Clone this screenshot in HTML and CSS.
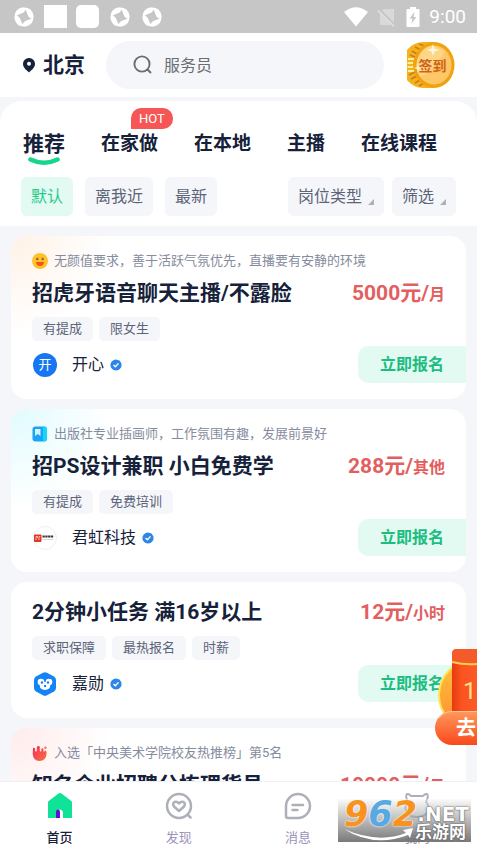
FILE: index.html
```html
<!DOCTYPE html>
<html lang="zh-CN">
<head>
<meta charset="utf-8">
<meta name="viewport" content="width=device-width, initial-scale=1">
<title>首页</title>
<link rel="stylesheet" href="styles.css">
</head>
<body>
<svg class="defs" aria-hidden="true">
  <defs>
    <path id="blade" d="M.6 11Q0 2.500 8 .6 11.500 0 11.500 2.500 10.500 6 6 7 2.500 8 .6 11Z" fill="#fff"/>
    <symbol id="shutter" viewBox="0 0 20 20">
      <use href="#blade"/>
      <use href="#blade" transform="rotate(90 10 10)"/>
      <use href="#blade" transform="rotate(180 10 10)"/>
      <use href="#blade" transform="rotate(270 10 10)"/>
    </symbol>
    <symbol id="verified" viewBox="0 0 12 12">
      <path d="M6 .4 7.700 1 9.500 1.500 10.500 3 11.500 4.500 11.500 6.500 11.200 8.200 10 9.700 8.500 11 6 11.500 3.500 11 2 9.700.8 8.200.4 6.300.7 4.300 1.700 2.500 3 1.400 4.500.8Z" fill="#2b86e8"/>
      <path d="M3.500 6 5.400 7.800 8.500 4.400" fill="none" stroke="#fff" stroke-width="1.400"/>
    </symbol>
  </defs>
</svg>

<div class="statusbar">
  <svg class="notice" viewBox="0 0 20 20"><use href="#shutter"/></svg>
  <span class="notice-box"></span>
  <span class="notice-box notice-box--round"></span>
  <svg class="notice" viewBox="0 0 20 20"><use href="#shutter"/></svg>
  <svg class="notice" viewBox="0 0 20 20"><use href="#shutter"/></svg>
  <div class="system">
    <svg width="24" height="20" viewBox="0 0 24 20"><path d="M0 5Q12-4.500 24 5L12 19.500Z" fill="#fff"/></svg>
    <svg width="20" height="20" viewBox="0 0 20 20"><path d="M7 2H17V18H3V6Z" fill="#d9d9d9"/><path d="M1 2 18 19" stroke="#c6c6c6" stroke-width="3.500"/><path d="M1 3.500 17 19.500" stroke="#dedede" stroke-width="1.800"/></svg>
    <svg width="14" height="20" viewBox="0 0 14 20"><path d="M4 0H10V2H12.500Q13.500 2 13.500 3V19Q13.500 20 12.500 20H1.500Q.5 20 .5 19V3Q.5 2 1.500 2H4Z" fill="#fff"/><path d="M8.500 5 3.500 11.500H6.500L5.500 16.500 10.500 10H7.500Z" fill="#c6c6c6"/></svg>
    <span>9:00</span>
  </div>
</div>

<header class="header">
  <button class="city" type="button">
    <svg width="12" height="15" viewBox="0 0 12 15"><path d="M6 0A5.900 5.900 0 0 1 12 6C12 9.500 8.500 12 6 14.500 3.500 12 0 9.500 0 6A5.900 5.900 0 0 1 6 0Z" fill="#16213a"/><circle cx="6" cy="5.800" r="2" fill="#fff"/></svg>
    北京
  </button>
  <label class="search">
    <svg width="20" height="20" viewBox="0 0 20 20" fill="none" stroke="#6a6d72" stroke-width="1.900" stroke-linecap="round"><circle cx="9" cy="9" r="7.600"/><path d="M14.500 14.500 17.500 17.500"/></svg>
    <input type="search" placeholder="服务员" aria-label="搜索职位">
  </label>
  <button class="checkin" type="button">
    <svg viewBox="0 0 48 48">
      <path d="M16 1H27V47H16A21 23 0 0 1 16 1Z" fill="#f6b21b"/>
      <g stroke="#fff0a0" stroke-width="2"><path d="M1 18H7M.5 22H6M.5 26H6M1 30H7"/></g>
      <g stroke="#c77a2c" stroke-width="1.600"><path d="M12 3 18 5M8 6 14 9M5 10 10 13M3 14 8 16M2 34 8 31M4 38 10 35M8 42 13 39M12 45 17 42"/></g>
      <ellipse cx="27" cy="24" rx="20.500" ry="23" fill="#f0a30f"/>
      <ellipse cx="27" cy="24" rx="17.500" ry="19.500" fill="#fdc765"/>
      <path d="M13 13Q20 3 27 5L38 10Q28 30 13 36Q6 24 13 13Z" fill="#ffe0a0" opacity=".6"/>
      <path d="M26 3 27.500 7.500 32 9 27.500 10.500 26 15 24.500 10.500 20 9 24.500 7.500ZM11 23 12 26 15 27 12 28 11 31 10 28 7 27 10 26Z" fill="#fff6d8"/>
    </svg>
    <span>签到</span>
  </button>
</header>

<section class="panel">
  <nav class="tabs">
    <a class="tab tab--active" href="#">推荐<svg class="smile" viewBox="0 0 32 9"><path d="M2.500 2.500Q16 9 29.500 2.500" fill="none" stroke="#14d68c" stroke-width="4.500" stroke-linecap="round"/></svg></a>
    <a class="tab" href="#">在家做<span class="hot">HOT</span></a>
    <a class="tab" href="#">在本地</a>
    <a class="tab" href="#">主播</a>
    <a class="tab" href="#">在线课程</a>
  </nav>
  <div class="filters">
    <button class="filter filter--active" type="button">默认</button>
    <button class="filter" type="button">离我近</button>
    <button class="filter" type="button">最新</button>
    <div class="filters-end">
      <button class="filter filter--menu" type="button">岗位类型</button>
      <button class="filter filter--menu" type="button">筛选</button>
    </div>
  </div>
</section>

<main class="jobs">
  <article class="card card--warm">
    <p class="reason">
      <svg viewBox="0 0 16 16"><circle cx="8" cy="8" r="8" fill="#fdc22d"/><circle cx="5.300" cy="6" r="1.200" fill="#b3541b"/><circle cx="10.700" cy="6" r="1.200" fill="#b3541b"/><path d="M4 9H12Q11.500 13 8 13T4 9Z" fill="#f0521e"/></svg>
      无颜值要求，善于活跃气氛优先，直播要有安静的环境
    </p>
    <div class="heading"><h2>招虎牙语音聊天主播/不露脸</h2><p class="pay">5000元/<small>月</small></p></div>
    <ul class="tags"><li>有提成</li><li>限女生</li></ul>
    <div class="footer">
      <span class="avatar avatar--letter">开</span>
      <span class="employer">开心</span>
      <svg class="verified"><use href="#verified"/></svg>
      <button class="apply" type="button">立即报名</button>
    </div>
  </article>

  <article class="card card--cool">
    <p class="reason">
      <svg viewBox="0 0 16 16"><rect x=".5" y=".5" width="14.500" height="15" rx="3" fill="#18a5f7"/><path d="M11 .5H12Q15 .5 15 3.500V12.500Q15 15.500 12 15.500H11Z" fill="#19d5fa"/><path d="M3 3H8.500V10L5.800 8 3 10Z" fill="#d6f3ff"/></svg>
      出版社专业插画师，工作氛围有趣，发展前景好
    </p>
    <div class="heading"><h2>招PS设计兼职 小白免费学</h2><p class="pay">288元/<small>其他</small></p></div>
    <ul class="tags"><li>有提成</li><li>免费培训</li></ul>
    <div class="footer">
      <svg class="avatar" viewBox="0 0 24 24"><circle cx="12" cy="12" r="11.500" fill="#fff" stroke="#eceef2"/><rect x="1" y="8.500" width="7.500" height="7.500" rx=".8" fill="#dc3a25"/><path d="M3 14V10.500H4.500V12M6 14V10.500H7.300" stroke="#ffd8c8" fill="none" stroke-width=".8"/><path d="M9.500 10.500H20.500" stroke="#3a3434" stroke-width="2" stroke-dasharray="2.300 .5"/><path d="M9.500 13.500H20.500" stroke="#c9c9c9" stroke-width=".7"/></svg>
      <span class="employer">君虹科技</span>
      <svg class="verified"><use href="#verified"/></svg>
      <button class="apply" type="button">立即报名</button>
    </div>
  </article>

  <article class="card">
    <div class="heading"><h2>2分钟小任务 满16岁以上</h2><p class="pay">12元/<small>小时</small></p></div>
    <ul class="tags"><li>求职保障</li><li>最热报名</li><li>时薪</li></ul>
    <div class="footer">
      <svg class="avatar" viewBox="0 0 24 24"><path d="M10 .7Q12-.3 14 .7L21 4.500Q23 5.700 23 8V16Q23 18.300 21 19.500L14 23.300Q12 24.300 10 23.300L3 19.500Q1 18.300 1 16V8Q1 5.700 3 4.500Z" fill="#1483f5"/><circle cx="8" cy="10" r="3.300" fill="#fff"/><circle cx="16" cy="10" r="3.300" fill="#fff"/><path d="M7 10H17Q19 17.500 12 18 5 17.500 7 10Z" fill="#fff"/><circle cx="9" cy="10.500" r="1.200" fill="#1483f5"/><circle cx="15" cy="10.500" r="1.200" fill="#1483f5"/><path d="M11 13H13V15H11Z" fill="#1483f5"/></svg>
      <span class="employer">嘉勋</span>
      <svg class="verified"><use href="#verified"/></svg>
      <button class="apply" type="button">立即报名</button>
    </div>
  </article>

  <article class="card card--rose">
    <p class="reason">
      <svg viewBox="0 0 16 16"><defs><linearGradient id="flame" x2="1" y2="1"><stop stop-color="#ec2f5c"/><stop offset="1" stop-color="#ff7040"/></linearGradient></defs><path d="M1 3Q2.500 2 3.200 4V6Q4 7 4.800 6V2Q6 .2 7.800 1.500V6Q8.500 7 9.300 6V4Q10.500 2.500 11.500 4V6.500Q12.500 7 13 5.500 15 5.500 14.500 9 14 16 7.500 16 1 15.500 .7 9Z" fill="url(#flame)"/><circle cx="13.400" cy="2.800" r="1.200" fill="#ff7040"/></svg>
      入选「中央美术学院校友热推榜」第5名
    </p>
    <div class="heading"><h2>知名企业招聘分拣理货员</h2><p class="pay">10000元/<small>月</small></p></div>
  </article>
</main>

<nav class="tabbar">
  <a class="tabbar-item tabbar-item--active" href="#">
    <svg viewBox="0 0 28 28"><path d="M14 1Q15 1 15.800 1.800L25.300 9Q26 9.600 26 10.500V26H2V10.500Q2 9.600 2.700 9L12.200 1.800Q13 1 14 1Z" fill="#0ee396"/><path d="M13 17.500Q17 17.500 17 21V26H13Z" fill="#fff"/><path d="M10 26V20.500Q10 17.500 12 17.500T14 20.500V26Z" fill="#5a11d8"/></svg>
    首页
  </a>
  <a class="tabbar-item" href="#">
    <svg viewBox="0 0 28 28" fill="none" stroke="#adb0b8" stroke-width="2.500" stroke-linecap="round" stroke-linejoin="round"><circle cx="14" cy="14" r="12"/><path d="M22.500 22.500 25.500 25.500"/><path d="M14 19 9 14.500Q7 11.500 9.500 10 12 9 14 11.500 16 9 18.500 10 21 11.500 19 14.500Z"/></svg>
    发现
  </a>
  <a class="tabbar-item" href="#">
    <svg viewBox="0 0 28 28" fill="none" stroke="#adb0b8" stroke-width="2.500" stroke-linecap="round" stroke-linejoin="round"><path d="M2 14A12 12 0 1 1 14 26H4Q2 26 2 24Z"/><path d="M8.500 13H19M8.500 18H13.500"/></svg>
    消息
  </a>
  <a class="tabbar-item" href="#">
    <svg viewBox="0 0 28 28" fill="none" stroke="#adb0b8" stroke-width="2" stroke-linecap="round" stroke-linejoin="round"><path d="M5 10Q2 4 4 2 6 1.500 8 4H20Q22 1.500 24 2 26 4 23 10 26 13 25.500 17 24 25 14 25T2.500 17Q2 13 5 10Z"/></svg>
    我的
  </a>
</nav>

<a class="promo" href="#">
  <svg viewBox="0 0 42 98">
    <defs>
      <linearGradient id="pill" x2="0" y2="1"><stop stop-color="#ff9a5c"/><stop offset="1" stop-color="#f9481c"/></linearGradient>
      <linearGradient id="envelope" x2="1"><stop stop-color="#e63a10"/><stop offset=".4" stop-color="#fb5420"/><stop offset="1" stop-color="#fb5a28"/></linearGradient>
      <linearGradient id="gold" x2="0" y2="1"><stop stop-color="#ffc23c"/><stop offset="1" stop-color="#ff8d30"/></linearGradient>
    </defs>
    <circle cx="39" cy="47" r="35" fill="url(#gold)" stroke="#ffe44d" stroke-width="2"/>
    <path d="M17 70V6Q17 1 22 1H42V70Z" fill="url(#envelope)"/>
    <path d="M17 14V6Q17 1 22 1H42V16Q29 17 17 14Z" fill="#f45a2a"/>
    <path d="M17 14Q29 17 42 16" fill="none" stroke="#ffd04a" stroke-width="2"/>
    <path d="M42 63H17A17 17 0 0 0 17 97H42Z" fill="url(#pill)"/>
    <path d="M42 63.500H17A17 17 0 0 0 4 70" fill="none" stroke="#ffc19a" stroke-width="1"/>
  </svg>
  <span class="promo-amount">1</span>
  <span class="promo-action">去</span>
</a>

<div class="watermark">
  <div class="watermark-number">9<span class="blue">6</span>2</div>
  <svg viewBox="0 0 70 14"><path d="M0 1Q34 16 62 5L59 2 69 0 66 10 64 7Q30 20 0 1Z" fill="#fff"/></svg>
  <div class="watermark-side"><span class="watermark-net">.NET</span><span class="watermark-name">乐游网</span></div>
</div>
</body>
</html>
```
FILE: styles.css
```css
* {
  box-sizing: border-box;
}

body {
  position: relative;
  display: flex;
  flex-direction: column;
  height: 100vh;
  margin: 0;
  overflow: hidden;
  background: #f5f6fa;
  color: #16213a;
  font-family: Roboto, "Noto Sans CJK SC", sans-serif;
}

button,
input {
  margin: 0;
  padding: 0;
  border: 0;
  background: none;
  color: inherit;
  font: inherit;
}

a {
  color: inherit;
  text-decoration: none;
}

h2,
p,
ul {
  margin: 0;
  padding: 0;
}

svg {
  display: block;
  flex: none;
}

.defs {
  position: absolute;
  width: 0;
  height: 0;
}

/* System status bar */
.statusbar {
  display: flex;
  flex: none;
  align-items: center;
  gap: 9px;
  height: 33px;
  padding: 0 11px 0 14px;
  background: #c6c6c6;
  color: #fff;
}

.notice {
  width: 20px;
  height: 20px;
  margin-right: 3px;
}

.notice-box {
  width: 23px;
  height: 23px;
  background: #fff;
}

.notice-box--round {
  margin-right: 2px;
  border-radius: 5px;
}

.notice-box:first-of-type {
  margin-left: -2px;
}

.system {
  display: flex;
  align-items: center;
  gap: 9px;
  margin-left: auto;
  font-size: 19px;
}

/* Header */
.header {
  display: flex;
  flex: none;
  align-items: center;
  height: 64px;
  padding: 0 22px 0 23px;
  background: #fff;
}

.city {
  display: flex;
  flex: none;
  align-items: center;
  gap: 8px;
  margin-right: 21px;
  font-size: 21px;
  font-weight: 700;
  line-height: 28px;
  white-space: nowrap;
}

.search {
  display: flex;
  flex: 1;
  align-items: center;
  gap: 11px;
  min-width: 0;
  height: 48px;
  padding: 0 27px;
  border-radius: 24px;
  background: #f5f6fa;
}

.search input {
  flex: 1;
  width: 100%;
  min-width: 0;
  outline: 0;
  font-size: 16px;
}

.search input::placeholder {
  color: #6a6d72;
  opacity: 1;
}

.checkin {
  display: grid;
  flex: none;
  place-items: center;
  width: 49px;
  height: 48px;
  margin-left: 22px;
  color: #cf6417;
  font-size: 14px;
  font-weight: 700;
}

.checkin svg,
.checkin span {
  grid-area: 1 / 1;
}

.checkin svg {
  width: 48px;
  height: 48px;
}

.checkin span {
  padding-left: 4px;
}

/* Tabs and filters */
.panel {
  flex: none;
  margin-top: 4px;
  padding: 29px 21px 10px;
  border-radius: 22px 22px 0 0;
  background: #fff;
}

.tabs {
  display: flex;
  gap: 36px;
  padding-left: 2px;
}

.tab {
  position: relative;
  font-size: 19px;
  font-weight: 700;
  line-height: 28px;
  white-space: nowrap;
}

.tab--active {
  font-size: 21px;
}

.smile {
  position: absolute;
  top: 27px;
  left: 5px;
  width: 32px;
  height: 9px;
}

.hot {
  position: absolute;
  top: -22px;
  left: 30px;
  padding: 0 8px;
  border-radius: 10px 10px 10px 0;
  background: #f65656;
  color: #fff;
  font-size: 13px;
  font-weight: 400;
  line-height: 21px;
}

.filters {
  display: flex;
  gap: 12px;
  margin-top: 19px;
}

.filters-end {
  display: flex;
  gap: 8px;
  margin-left: auto;
}

.filter {
  height: 39px;
  padding: 0 10px;
  border-radius: 6px;
  background: #f5f6fa;
  color: #5b6478;
  font-size: 16px;
  line-height: 24px;
  white-space: nowrap;
}

.filter--active {
  background: #e2faf1;
  color: #1fcb8c;
}

.filter--menu {
  display: flex;
  align-items: center;
  gap: 6px;
}

.filter--menu::after {
  width: 0;
  height: 0;
  margin-top: 11px;
  border-bottom: 6px solid #aeb1b8;
  border-left: 6px solid transparent;
  content: "";
}

/* Job cards */
.jobs {
  display: flex;
  flex: 1;
  flex-direction: column;
  gap: 10px;
  min-height: 0;
  padding: 10px 11px 0;
  overflow: hidden;
}

.card {
  flex: none;
  padding: 15px 0 16px 21px;
  border-radius: 16px;
  background: #fff;
  overflow: hidden;
}

.card--warm {
  background: radial-gradient(circle at 0 0, #fff2e6, #fff 100px);
}

.card--cool {
  background: radial-gradient(circle at 0 0, #e0fbff, #fff 100px);
}

.card--rose {
  background: radial-gradient(circle at 0 0, #ffebeb, #fff 100px);
}

.reason {
  display: flex;
  align-items: center;
  gap: 6px;
  margin-bottom: 7px;
  color: #858c9e;
  font-size: 13px;
  line-height: 20px;
}

.reason svg {
  width: 16px;
  height: 16px;
}

.heading {
  display: flex;
  justify-content: space-between;
  height: 30px;
  padding-right: 21px;
  line-height: 30px;
  white-space: nowrap;
}

.heading h2 {
  font-size: 21px;
  font-weight: 700;
}

.pay {
  color: #e35f5f;
  font-size: 21px;
  font-weight: 700;
}

.pay small {
  font-size: 16px;
  line-height: 16px;
}

.tags {
  display: flex;
  gap: 6px;
  margin-top: 9px;
  list-style: none;
}

.tags li {
  padding: 0 11px;
  border-radius: 5px;
  background: #f5f6fa;
  color: #5b6478;
  font-size: 13px;
  line-height: 24px;
}

.footer {
  display: flex;
  align-items: center;
  margin-top: 5px;
}

.avatar {
  width: 24px;
  height: 24px;
  margin: 0 15px 0 1px;
}

.avatar--letter {
  border-radius: 50%;
  background: #1677f2;
  color: #fff;
  font-size: 13px;
  line-height: 24px;
  text-align: center;
}

.employer {
  font-size: 16px;
  line-height: 24px;
}

.verified {
  width: 12px;
  height: 12px;
  margin-left: 6px;
}

.apply {
  height: 37px;
  margin-left: auto;
  padding: 0 22px;
  border-radius: 10px 0 0 10px;
  background: #e2faf1;
  color: #1dbd82;
  font-size: 16px;
  font-weight: 700;
  line-height: 24px;
}

/* Bottom navigation */
.tabbar {
  display: grid;
  flex: none;
  grid-template-columns: repeat(4, 1fr);
  height: 67px;
  border-top: 1px solid #eff0f3;
  background: #fff;
}

.tabbar-item {
  display: flex;
  flex-direction: column;
  gap: 8px;
  align-items: center;
  padding-top: 10px;
  color: #9b93b8;
  font-size: 13px;
  line-height: 20px;
}

.tabbar-item svg {
  width: 28px;
  height: 28px;
}

.tabbar-item--active {
  color: #16213a;
  font-weight: 500;
}

/* Floating red envelope */
.promo {
  position: absolute;
  right: 0;
  bottom: 102px;
  width: 42px;
  height: 98px;
  overflow: hidden;
}

.promo svg {
  width: 42px;
  height: 98px;
}

.promo-amount {
  position: absolute;
  top: 28px;
  left: 28px;
  color: #ffe08a;
  font-size: 24px;
  line-height: 30px;
}

.promo-action {
  position: absolute;
  top: 65px;
  left: 21px;
  color: #fff;
  font-size: 20px;
  font-weight: 700;
  line-height: 30px;
}

/* Site watermark */
.watermark {
  position: absolute;
  right: 6px;
  bottom: 6px;
  width: 133px;
  height: 43px;
  background: linear-gradient(rgba(245, 245, 245, 0.4), rgba(110, 110, 110, 0.92));
}

.watermark-number {
  position: absolute;
  top: 0;
  left: 6px;
  color: #f7931e;
  font-family: "DejaVu Sans", sans-serif;
  font-size: 35px;
  font-style: italic;
  font-weight: 700;
  line-height: 30px;
  text-shadow: 0 0 2px #fff, 0 0 1px #fff;
}

.watermark-number .blue {
  color: #59a9e0;
}

.watermark svg {
  position: absolute;
  bottom: 0;
  left: 6px;
  width: 70px;
  height: 14px;
}

.watermark-side {
  position: absolute;
  top: 6px;
  right: 2px;
  display: flex;
  flex-direction: column;
  align-items: flex-end;
  color: #fff;
  font-weight: 700;
  line-height: 18px;
  text-shadow: 0 0 2px #555, 0 0 1px #555;
}

.watermark-net {
  font-family: "DejaVu Sans", sans-serif;
  font-size: 20px;
}

.watermark-name {
  padding-right: 3px;
  font-size: 17px;
}
```
